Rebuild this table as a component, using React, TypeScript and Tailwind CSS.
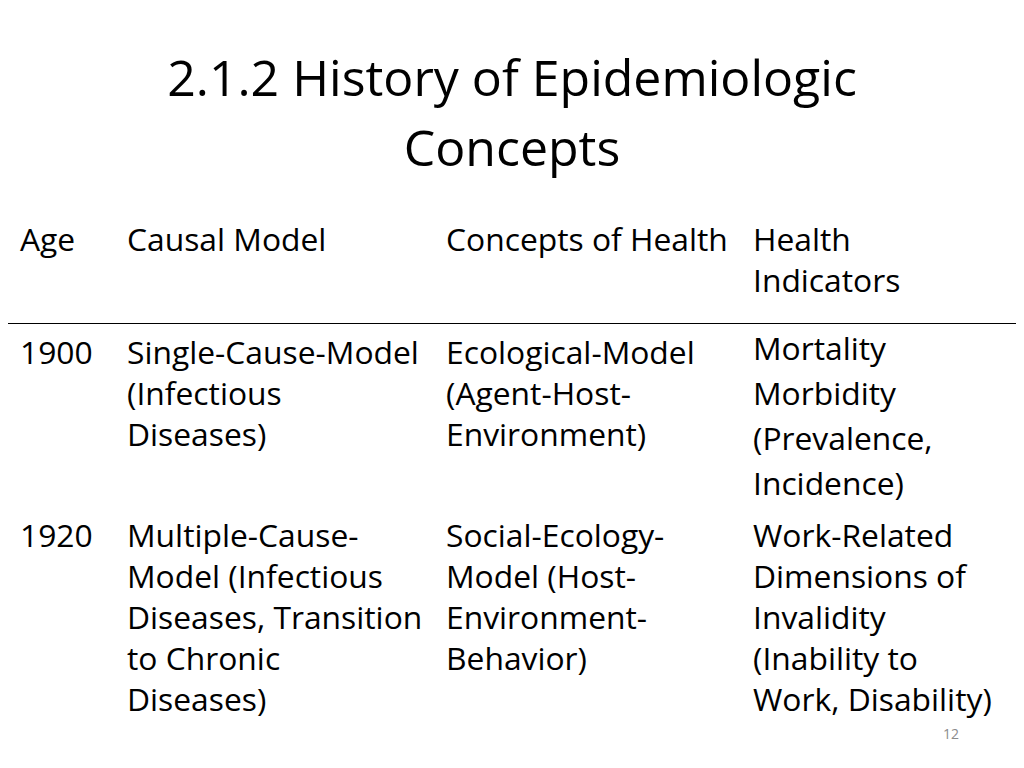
const rows = [
  {
    age: "1900",
    cause: ["Single-Cause-Model", "(Infectious", "Diseases)"],
    health: ["Ecological-Model", "(Agent-Host-", "Environment)"],
    indicators: ["Mortality", "Morbidity", "(Prevalence,", "Incidence)"],
    wide: true,
  },
  {
    age: "1920",
    cause: ["Multiple-Cause-", "Model (Infectious", "Diseases, Transition", "to Chronic", "Diseases)"],
    health: ["Social-Ecology-", "Model (Host-", "Environment-", "Behavior)"],
    indicators: ["Work-Related", "Dimensions of", "Invalidity", "(Inability to", "Work, Disability)"],
    wide: false,
  },
];

function Lines({ items }: { items: string[] }) {
  return (
    <div>
      {items.map((t) => (
        <div key={t} className="whitespace-nowrap">
          {t}
        </div>
      ))}
    </div>
  );
}

export default function App() {
  return (
    <div className="relative h-[768px] w-[1024px] overflow-hidden bg-white text-black [font-family:'Open_Sans',sans-serif]">
      <h1 className="pt-[42px] text-center text-[50px] leading-[70px] font-normal">
        2.1.2 History of Epidemiologic
        <br />
        Concepts
      </h1>

      <div className="mt-[36px] px-[8px] text-[31.8px] leading-[41px]">
        <div className="grid grid-cols-[119px_319px_307px_1fr] pb-[23px]">
          <div className="pl-[12px]">Age</div>
          <div>Causal Model</div>
          <div>Concepts of Health</div>
          <div>
            Health
            <br />
            Indicators
          </div>
        </div>
        <div className="h-px bg-black" />
        {rows.map((r) => (
          <div key={r.age} className={`grid grid-cols-[119px_319px_307px_1fr] ${r.wide ? "pt-[7px]" : "pt-[9px]"}`}>
            <div className="pl-[12px]">{r.age}</div>
            <Lines items={r.cause} />
            <Lines items={r.health} />
            <div className={r.wide ? "-mt-[6px] leading-[45px]" : ""}>
              <Lines items={r.indicators} />
            </div>
          </div>
        ))}
      </div>

      <div className="absolute left-[943px] top-[723px] text-[14px] text-[#8b8b8b] [font-family:'Open_Sans',sans-serif]">
        12
      </div>
    </div>
  );
}
